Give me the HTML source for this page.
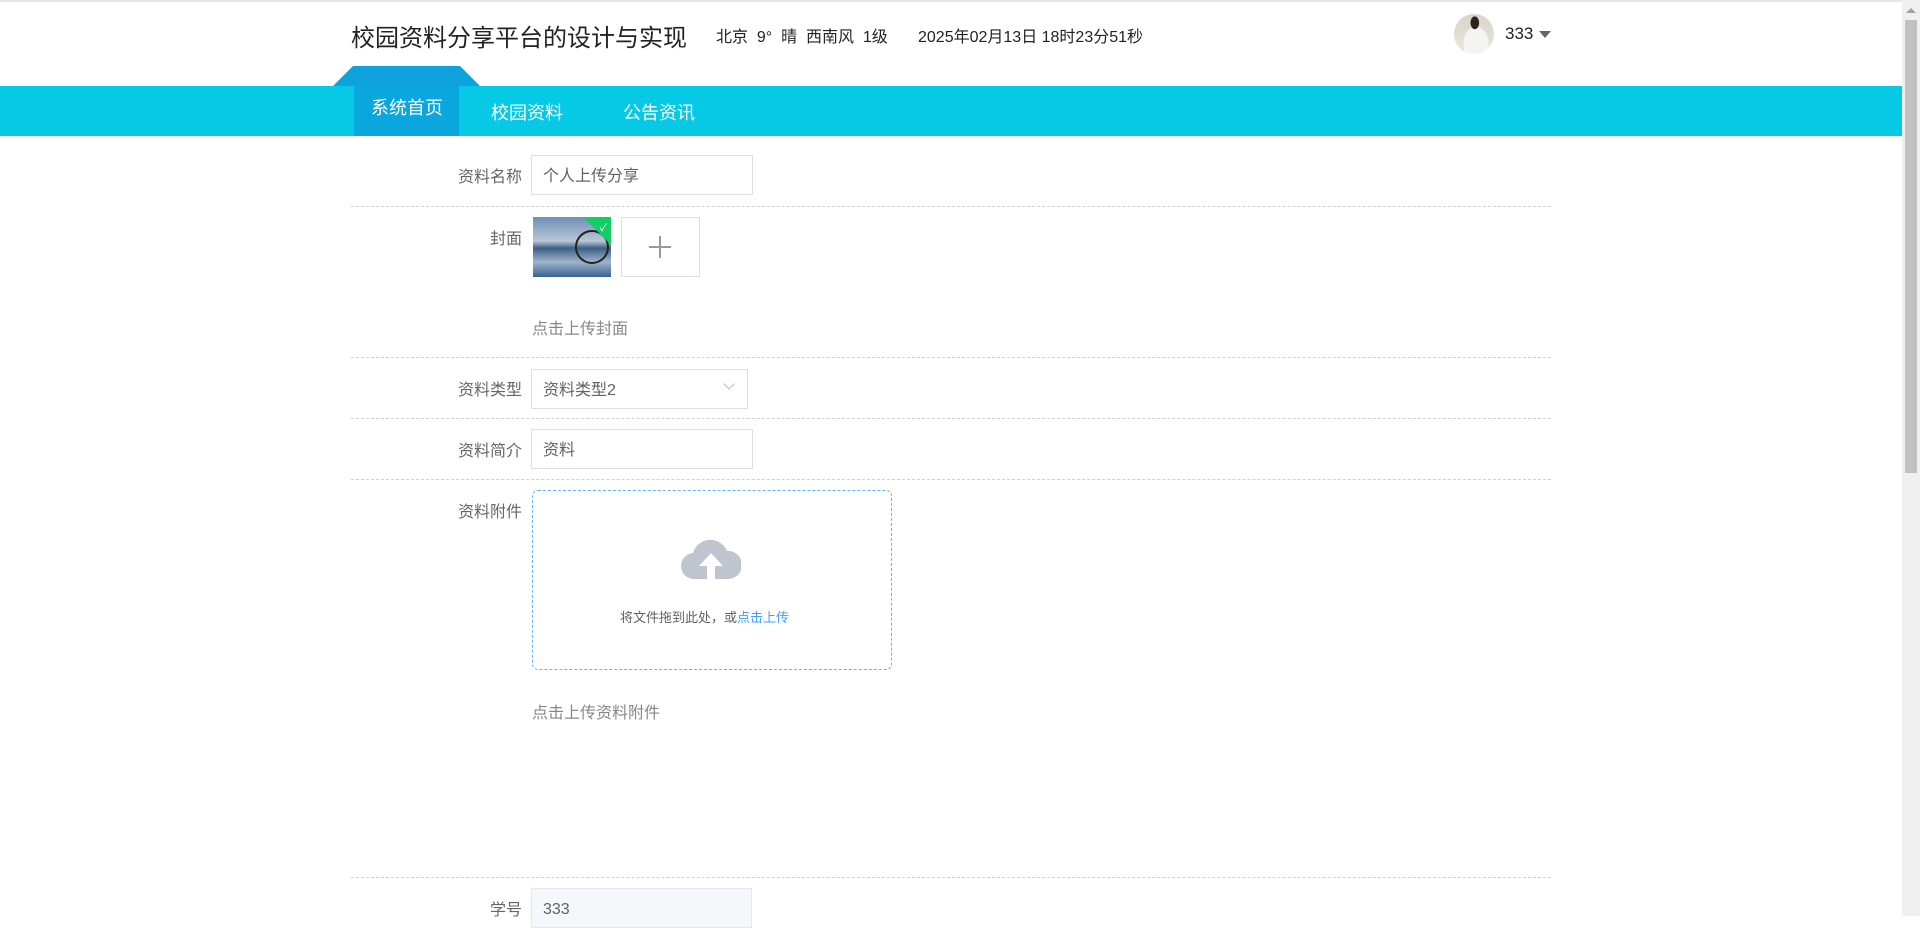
<!DOCTYPE html>
<html><head><meta charset="utf-8"><style>
*{margin:0;padding:0;box-sizing:border-box}
body{width:1920px;height:916px;overflow:hidden;background:#fff;font-family:"Liberation Sans","Noto Sans CJK SC",sans-serif;position:relative}
.a{position:absolute;white-space:nowrap}
.lbl{position:absolute;right:1398px;font-size:16px;color:#666;text-align:right}
.inp{position:absolute;left:531px;width:222px;height:40px;border:1px solid #dcdfe6;font-size:16px;color:#606266;padding-left:11px;padding-top:2px;line-height:38px;background:#fff}
.dl{position:absolute;left:351px;width:1200px;border-top:1px dashed #d0d0d0;height:0}
.hint{position:absolute;left:532px;font-size:16px;color:#888}
</style></head><body>
<div class="a" style="left:0;top:0;width:1920px;height:2px;background:#e6e6e6"></div>
<div class="a" style="left:351px;top:18px;font-size:24px;color:#222">校园资料分享平台的设计与实现</div>
<div class="a" style="left:716px;top:23px;font-size:16px;color:#222">北京&nbsp; 9°&nbsp; 晴&nbsp; 西南风&nbsp; 1级</div>
<div class="a" style="left:918px;top:23px;font-size:16px;color:#222">2025年02月13日 18时23分51秒</div>
<div class="a" style="left:1454px;top:14px;width:40px;height:40px;border-radius:50%;background:radial-gradient(ellipse at 52% 22%,#2a2320 0 14%,transparent 15%),radial-gradient(ellipse at 55% 75%,#f4f4f2 0 40%,transparent 41%),linear-gradient(#d9d4c8,#e8e6dc);"></div>
<div class="a" style="left:1505px;top:24px;font-size:17px;color:#222">333</div>
<div class="a" style="left:1539px;top:31px;width:0;height:0;border-left:6px solid transparent;border-right:6px solid transparent;border-top:7px solid #666"></div>
<div class="a" style="left:0;top:86px;width:1902px;height:50px;background:#06c9e6"></div>
<div class="a" style="left:333px;top:66px;height:20px;border-bottom:20px solid #0ea2dc;border-left:20px solid transparent;border-right:20px solid transparent;width:147px"></div>
<div class="a" style="left:354px;top:86px;width:105px;height:50px;background:#0aa6de"></div>
<div class="a" style="left:371px;top:94px;font-size:18px;color:#fff">系统首页</div>
<div class="a" style="left:491px;top:99px;font-size:18px;color:#fff">校园资料</div>
<div class="a" style="left:623px;top:99px;font-size:18px;color:#fff">公告资讯</div>
<div class="a" style="left:1902px;top:0;width:18px;height:916px;background:#f0f0f0"></div>
<div class="a" style="left:1905px;top:20px;width:12px;height:453px;background:#c1c1c1"></div>
<div class="a" style="left:1906px;top:8px;width:0;height:0;border-left:5px solid transparent;border-right:5px solid transparent;border-bottom:5px solid #a0a0a0"></div>

<div class="lbl" style="top:163px">资料名称</div>
<div class="inp" style="top:155px">个人上传分享</div>
<div class="dl" style="top:206px"></div>
<div class="lbl" style="top:225px">封面</div>
<div class="a" style="left:533px;top:217px;width:78px;height:60px;background:linear-gradient(180deg,#6f8fb8 0%,#b9c6d6 40%,#3d5f84 52%,#9fb4cc 75%,#3a6390 100%)"></div>
<div class="a" style="left:575px;top:230px;width:34px;height:34px;border:2px solid #222;border-radius:50%"></div>
<div class="a" style="left:583px;top:217px;width:0;height:0;border-top:28px solid #13ce66;border-left:28px solid transparent"></div>
<div class="a" style="left:600px;top:219px;color:#fff;font-size:10px">✓</div>
<div class="a" style="left:621px;top:217px;width:79px;height:60px;border:1px solid #dcdfe6"></div>
<div class="a" style="left:649px;top:246px;width:22px;height:2px;background:#999"></div>
<div class="a" style="left:659px;top:236px;width:2px;height:22px;background:#999"></div>
<div class="hint" style="top:315px">点击上传封面</div>
<div class="dl" style="top:357px"></div>
<div class="lbl" style="top:376px">资料类型</div>
<div class="inp" style="top:369px;width:217px">资料类型2</div>
<div class="a" style="left:725px;top:380px;width:8px;height:8px;border-right:1px solid #bbb;border-bottom:1px solid #bbb;transform:rotate(45deg)"></div>
<div class="dl" style="top:418px"></div>
<div class="lbl" style="top:437px">资料简介</div>
<div class="inp" style="top:429px">资料</div>
<div class="dl" style="top:479px"></div>
<div class="lbl" style="top:498px">资料附件</div>
<div class="a" style="left:532px;top:490px;width:360px;height:180px;border:1px dashed #409eff;border-radius:6px;opacity:.8"></div>
<svg class="a" style="left:681px;top:533px" width="60" height="46" viewBox="0 0 60 46"><path d="M14 46 A13 13 0 0 1 12 20 A18 18 0 0 1 46 18 A14 14 0 0 1 48 46 Z" fill="#c0c4cc"/><path d="M30 20 L42 33 L34 33 L34 46 L26 46 L26 33 L18 33 Z" fill="#fff"/></svg>
<div class="a" style="left:620px;top:607px;font-size:13px;color:#606266">将文件拖到此处，或<span style="color:#409eff">点击上传</span></div>
<div class="hint" style="top:699px">点击上传资料附件</div>
<div class="dl" style="top:877px"></div>
<div class="lbl" style="top:896px">学号</div>
<div class="inp" style="top:888px;width:221px;background:#f5f7fa;border-color:#e4e7ed">333</div>
</body></html>
